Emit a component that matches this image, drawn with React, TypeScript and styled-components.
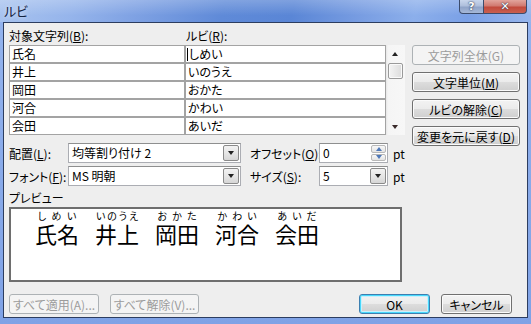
import React from 'react';
import styled, { createGlobalStyle, css } from 'styled-components';

const GlobalStyle = createGlobalStyle`
  html, body {
    margin: 0;
    padding: 0;
    background: #ffffff;
  }
  body {
    font-family: "Noto Sans CJK JP", "Noto Sans", sans-serif;
    font-size: 12px;
    font-feature-settings: "palt";
    color: #000;
  }
`;

const Window = styled.div`
  width: 531px;
  height: 324px;
  display: flex;
  flex-direction: column;
  overflow: hidden;
  background: linear-gradient(180deg, #94b4ee 0%, #7fa2e6 100%);
`;

const TitleBar = styled.div`
  height: 22px;
  flex: none;
  display: flex;
  align-items: flex-start;
  justify-content: space-between;
  background: linear-gradient(180deg, rgba(255, 255, 255, 0.22), rgba(255, 255, 255, 0) 70%),
    linear-gradient(100deg, #a8c3ef 0%, #95b4eb 14%, #7ea1e3 26%, #5f8ad8 42%, #5a86d6 55%, #789de2 68%, #8cafeb 78%, #7aa0e6 88%, #97b6ec 100%);
`;

const Title = styled.div`
  padding-left: 4px;
  line-height: 22px;
  font-size: 13px;
  color: #13223e;
  text-shadow: 0 0 4px rgba(255, 255, 255, 0.7);
`;

const CaptionButtons = styled.div`
  display: flex;
  margin-right: 4px;
`;

const CaptionBtn = styled.div<{ $close?: boolean }>`
  width: ${(p) => (p.$close ? 43 : 25)}px;
  height: 14px;
  box-sizing: border-box;
  border: 1px solid #3c4c6c;
  border-top: none;
  display: flex;
  align-items: center;
  justify-content: center;
  color: #fff;
  font-family: "DejaVu Sans", sans-serif;
  font-weight: bold;
  font-size: 11px;
  line-height: 12px;
  text-shadow: 0 0 2px #2a3550, 0 0 1px #2a3550;
  ${(p) =>
    p.$close
      ? css`
          border-radius: 0 0 4px 0;
          border-left: none;
          background: linear-gradient(180deg, #e2a59d 0%, #d17a70 45%, #c24a3c 55%, #c9604f 100%);
        `
      : css`
          border-radius: 0 0 0 4px;
          background: linear-gradient(180deg, #c9d6ec 0%, #aebfdc 45%, #90a4c8 55%, #a6b8d8 100%);
        `}
`;

const Client = styled.div`
  flex: 1;
  margin: 0 3px 6px 3px;
  border: 1px solid #2c3d60;
  background: #eeeeee;
  padding: 4px 7px 3px 5px;
  display: flex;
  flex-direction: column;
`;

const TopSection = styled.div`
  display: flex;
  align-items: flex-start;
  gap: 7px;
  height: 108px;
`;

const ListArea = styled.div`
  width: 396px;
  display: flex;
  flex-direction: column;
`;

const HeaderRow = styled.div`
  display: grid;
  grid-template-columns: 177px 1fr;
  height: 18px;
  line-height: 18px;
`;

const ListBody = styled.div`
  display: flex;
  height: 90px;
`;

const Table = styled.div`
  width: 377px;
  box-sizing: border-box;
  padding: 1px 1px 0 1px;
  background: #a3a3a3;
  display: grid;
  grid-template-columns: 174px 1fr;
  grid-auto-rows: 16px;
  gap: 2px;
`;

const Cell = styled.div`
  background: #ffffff;
  line-height: 16px;
  padding-left: 2px;
  white-space: nowrap;
  display: flex;
  align-items: center;
`;

const Caret = styled.span`
  display: inline-block;
  width: 1px;
  height: 13px;
  background: #000;
  margin-left: -1px;
  margin-right: 1px;
`;

const ScrollBar = styled.div`
  width: 19px;
  box-sizing: border-box;
  background: linear-gradient(90deg, #e6e6e6 0px, #f5f5f5 2px, #f7f7f7 100%);
  display: flex;
  flex-direction: column;
  align-items: center;
  padding: 0 2px 0 1px;
`;

const ArrowBox = styled.div`
  height: 17px;
  width: 100%;
  display: flex;
  align-items: center;
  justify-content: center;
`;

const Triangle = styled.div<{ $up?: boolean; $color?: string }>`
  width: 0;
  height: 0;
  border-left: 3.5px solid transparent;
  border-right: 3.5px solid transparent;
  ${(p) =>
    p.$up
      ? css`border-bottom: 4px solid ${p.$color || '#222'};`
      : css`border-top: 4px solid ${p.$color || '#222'};`}
`;

const Thumb = styled.div`
  width: 15px;
  height: 16px;
  box-sizing: border-box;
  border: 1px solid #9a9a9a;
  border-radius: 2px;
  background: linear-gradient(90deg, #f4f4f4 0%, #e8e8e8 50%, #dcdcdc 100%);
  box-shadow: inset 0 0 0 1px #fafafa;
  margin-top: 1px;
`;

const Track = styled.div`
  flex: 1;
`;

const SideButtons = styled.div`
  display: flex;
  flex-direction: column;
  gap: 7px;
  padding-top: 18px;
`;

const Button = styled.div<{ $width?: number; $disabled?: boolean; $default?: boolean }>`
  width: ${(p) => p.$width || 108}px;
  height: 20px;
  flex: none;
  box-sizing: border-box;
  border-radius: 3px;
  display: flex;
  align-items: center;
  justify-content: center;
  white-space: nowrap;
  font-size: 12px;
  border: 1px solid #707070;
  background: linear-gradient(180deg, #f3f3f3 0%, #ebebeb 50%, #dddddd 50%, #cfcfcf 100%);
  box-shadow: inset 0 0 0 1px #fbfbfb;
  ${(p) =>
    p.$disabled &&
    css`
      border-color: #adb2b5;
      background: #f4f4f4;
      box-shadow: none;
      color: #9c9c9c;
    `}
  ${(p) =>
    p.$default &&
    css`
      border-color: #3c7fb1;
      box-shadow: inset 0 0 0 1px #48d8fb, inset 0 0 0 2px #c8f0fc;
    `}
`;

const Ak = styled.u`
  text-decoration: underline;
  text-underline-offset: 1px;
`;

const FormRows = styled.div`
  display: flex;
  flex-direction: column;
  gap: 3px;
  margin-top: 8px;
`;

const FormRow = styled.div`
  display: flex;
  align-items: center;
  height: 20px;
`;

const Label = styled.div<{ $width: number; $gap?: number }>`
  width: ${(p) => p.$width}px;
  margin-left: ${(p) => p.$gap || 0}px;
  white-space: nowrap;
`;

const Field = styled.div<{ $width: number }>`
  width: ${(p) => p.$width}px;
  height: 20px;
  box-sizing: border-box;
  background: #fff;
  border: 1px solid #abadb3;
  border-top-color: #8e8f8f;
  display: flex;
  align-items: stretch;
`;

const FieldText = styled.div`
  flex: 1;
  padding-left: 3px;
  line-height: 18px;
  white-space: nowrap;
`;

const DropButton = styled.div`
  width: 16px;
  margin: 1px;
  box-sizing: border-box;
  border: 1px solid #8a8a8a;
  border-radius: 2px;
  background: linear-gradient(180deg, #f2f2f2 0%, #e6e6e6 50%, #d6d6d6 100%);
  display: flex;
  align-items: center;
  justify-content: center;
`;

const Spin = styled.div`
  width: 15px;
  margin: 0 1px 0 0;
  display: flex;
  flex-direction: column;
  gap: 1px;
  padding: 1px 0;
`;

const SpinHalf = styled.div`
  flex: 1;
  box-sizing: border-box;
  border: 1px solid #b8b8b8;
  border-radius: 2px;
  background: linear-gradient(180deg, #f8f8f8, #e4e4e4);
  display: flex;
  align-items: center;
  justify-content: center;
`;

const Unit = styled.div`
  margin-left: 5px;
`;

const PreviewLabel = styled.div`
  margin-top: 2px;
  height: 19px;
  line-height: 19px;
`;

const PreviewBox = styled.div`
  width: 393px;
  height: 75px;
  flex: none;
  box-sizing: border-box;
  border: 2px solid #6e6e6e;
  background: #fff;
  display: flex;
  align-items: flex-start;
  gap: 16px;
  padding: 1px 0 0 24px;
`;

const Word = styled.div`
  display: flex;
  flex-direction: column;
`;

const RubyLine = styled.div`
  display: flex;
  justify-content: space-around;
  font-size: 10px;
  line-height: 11px;
  height: 11px;
`;

const BaseText = styled.div`
  font-size: 22px;
  line-height: 24px;
  white-space: nowrap;
`;

const BottomRow = styled.div`
  display: flex;
  align-items: center;
  gap: 11px;
  margin-top: 12px;
  padding-right: 8px;
`;

const Spacer = styled.div`
  flex: 1;
`;

const rows = [
  ['氏名', 'しめい'],
  ['井上', 'いのうえ'],
  ['岡田', 'おかた'],
  ['河合', 'かわい'],
  ['会田', 'あいだ'],
];

export default function App() {
  return (
    <>
      <GlobalStyle />
      <Window>
        <TitleBar>
          <Title>ルビ</Title>
          <CaptionButtons>
            <CaptionBtn>?</CaptionBtn>
            <CaptionBtn $close>✕</CaptionBtn>
          </CaptionButtons>
        </TitleBar>
        <Client>
          <TopSection>
            <ListArea>
              <HeaderRow>
                <div>
                  対象文字列(<Ak>B</Ak>):
                </div>
                <div>
                  ルビ(<Ak>R</Ak>):
                </div>
              </HeaderRow>
              <ListBody>
                <Table>
                  {rows.map(([base, ruby], i) => (
                    <React.Fragment key={base}>
                      <Cell>{base}</Cell>
                      <Cell>
                        {i === 0 && <Caret />}
                        {ruby}
                      </Cell>
                    </React.Fragment>
                  ))}
                </Table>
                <ScrollBar>
                  <ArrowBox>
                    <Triangle $up />
                  </ArrowBox>
                  <Thumb />
                  <Track />
                  <ArrowBox>
                    <Triangle $color="#3a2a2a" />
                  </ArrowBox>
                </ScrollBar>
              </ListBody>
            </ListArea>
            <SideButtons>
              <Button $disabled>文字列全体(G)</Button>
              <Button>
                文字単位(<Ak>M</Ak>)
              </Button>
              <Button>
                ルビの解除(<Ak>C</Ak>)
              </Button>
              <Button>
                変更を元に戻す(<Ak>D</Ak>)
              </Button>
            </SideButtons>
          </TopSection>

          <FormRows>
            <FormRow>
              <Label $width={59}>
                配置(<Ak>L</Ak>):
              </Label>
              <Field $width={173}>
                <FieldText>均等割り付け 2</FieldText>
                <DropButton>
                  <Triangle />
                </DropButton>
              </Field>
              <Label $width={69} $gap={9}>
                オフセット(<Ak>O</Ak>):
              </Label>
              <Field $width={69}>
                <FieldText>0</FieldText>
                <Spin>
                  <SpinHalf>
                    <Triangle $up $color="#4f78b8" />
                  </SpinHalf>
                  <SpinHalf>
                    <Triangle $color="#4f78b8" />
                  </SpinHalf>
                </Spin>
              </Field>
              <Unit>pt</Unit>
            </FormRow>
            <FormRow>
              <Label $width={59}>
                フォント(<Ak>F</Ak>):
              </Label>
              <Field $width={173}>
                <FieldText>MS 明朝</FieldText>
                <DropButton>
                  <Triangle />
                </DropButton>
              </Field>
              <Label $width={69} $gap={9}>
                サイズ(<Ak>S</Ak>):
              </Label>
              <Field $width={69}>
                <FieldText>5</FieldText>
                <DropButton>
                  <Triangle />
                </DropButton>
              </Field>
              <Unit>pt</Unit>
            </FormRow>
          </FormRows>

          <PreviewLabel>プレビュー</PreviewLabel>
          <PreviewBox>
            {rows.map(([base, ruby]) => (
              <Word key={base}>
                <RubyLine>
                  {ruby.split('').map((ch, i) => (
                    <span key={i}>{ch}</span>
                  ))}
                </RubyLine>
                <BaseText>{base}</BaseText>
              </Word>
            ))}
          </PreviewBox>

          <BottomRow>
            <Button $width={90} $disabled>
              すべて適用(A)...
            </Button>
            <Button $width={89} $disabled>
              すべて解除(V)...
            </Button>
            <Spacer />
            <Button $width={71} $default>
              OK
            </Button>
            <Button $width={71}>キャンセル</Button>
          </BottomRow>
        </Client>
      </Window>
    </>
  );
}
